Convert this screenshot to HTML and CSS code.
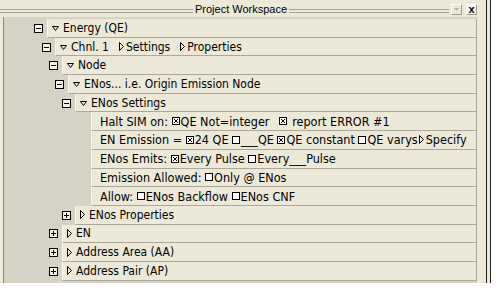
FILE: index.html
```html
<!DOCTYPE html>
<html lang="en">

<head>
    <meta charset="UTF-8">
    <title>Project Workspace</title>
    <link rel="stylesheet" href="styles.css">
</head>

<body>
    <div class="workspace">
        <div class="panel">
            <div class="titlebar">
                <span class="rule left"></span>
                <span class="title">Project Workspace</span>
                <span class="rule"></span>
                <span class="tb-btn drop">
                    <svg width="5" height="3" viewBox="0 0 5 3"><path d="M0 0h5l-2.5 3z" fill="#b5b2a6"/></svg>
                </span>
                <span class="tb-btn close">x</span>
            </div>

            <div class="tree">
                <div class="row">
                    <span class="toggle minus l0"></span>
                    <div class="cell"><svg class="tri-d" width="7" height="5" viewBox="0 0 7 5"><path d="M.5 .5h6l-3 4z" fill="none" stroke="#000"/></svg>Energy (QE)</div>
                </div>
                <div class="row">
                    <span class="toggle minus l1"></span>
                    <div class="cell"><svg class="tri-d" width="7" height="5" viewBox="0 0 7 5"><path d="M.5 .5h6l-3 4z" fill="none" stroke="#000"/></svg>Chnl. 1<span class="link"><svg class="tri-r" width="5" height="9" viewBox="0 0 5 9"><path d="M.5 .5v8l4-4z" fill="none" stroke="#000"/></svg>Settings</span><span class="link"><svg class="tri-r" width="5" height="9" viewBox="0 0 5 9"><path d="M.5 .5v8l4-4z" fill="none" stroke="#000"/></svg>Properties</span></div>
                </div>
                <div class="row">
                    <span class="toggle minus l2"></span>
                    <div class="cell"><svg class="tri-d" width="7" height="5" viewBox="0 0 7 5"><path d="M.5 .5h6l-3 4z" fill="none" stroke="#000"/></svg>Node</div>
                </div>
                <div class="row">
                    <span class="toggle minus l3"></span>
                    <div class="cell"><svg class="tri-d" width="7" height="5" viewBox="0 0 7 5"><path d="M.5 .5h6l-3 4z" fill="none" stroke="#000"/></svg>ENos... i.e. Origin Emission Node</div>
                </div>
                <div class="row">
                    <span class="toggle minus l4"></span>
                    <div class="cell"><svg class="tri-d" width="7" height="5" viewBox="0 0 7 5"><path d="M.5 .5h6l-3 4z" fill="none" stroke="#000"/></svg>ENos Settings</div>
                </div>

                <div class="row leaf">
                    <div class="cell">Halt SIM on:&nbsp;<svg class="check" width="8" height="8" viewBox="0 0 8 8"><rect x=".5" y=".5" width="7" height="7" fill="#fff" stroke="#000"/><path d="M2 2l4 4M6 2l-4 4" stroke="#000"/></svg>QE Not=integer&nbsp;&nbsp;<svg class="check wide" width="8" height="8" viewBox="0 0 8 8"><rect x=".5" y=".5" width="7" height="7" fill="#fff" stroke="#000"/><path d="M2 2l4 4M6 2l-4 4" stroke="#000"/></svg>&nbsp;report ERROR #1</div>
                </div>
                <div class="row leaf">
                    <div class="cell">EN Emission =&nbsp;<svg class="check" width="8" height="8" viewBox="0 0 8 8"><rect x=".5" y=".5" width="7" height="7" fill="#fff" stroke="#000"/><path d="M2 2l4 4M6 2l-4 4" stroke="#000"/></svg>24 QE&nbsp;<svg class="check" width="8" height="8" viewBox="0 0 8 8"><rect x=".5" y=".5" width="7" height="7" fill="#fff" stroke="#000"/></svg>___QE&nbsp;<svg class="check" width="8" height="8" viewBox="0 0 8 8"><rect x=".5" y=".5" width="7" height="7" fill="#fff" stroke="#000"/><path d="M2 2l4 4M6 2l-4 4" stroke="#000"/></svg>QE constant&nbsp;<svg class="check" width="8" height="8" viewBox="0 0 8 8"><rect x=".5" y=".5" width="7" height="7" fill="#fff" stroke="#000"/></svg>QE varys<svg class="tri-r spec" width="5" height="9" viewBox="0 0 5 9"><path d="M.5 .5v8l4-4z" fill="none" stroke="#000"/></svg>Specify</div>
                </div>
                <div class="row leaf">
                    <div class="cell">ENos Emits:&nbsp;<svg class="check" width="8" height="8" viewBox="0 0 8 8"><rect x=".5" y=".5" width="7" height="7" fill="#fff" stroke="#000"/><path d="M2 2l4 4M6 2l-4 4" stroke="#000"/></svg>Every Pulse&nbsp;<svg class="check" width="8" height="8" viewBox="0 0 8 8"><rect x=".5" y=".5" width="7" height="7" fill="#fff" stroke="#000"/></svg>Every___Pulse</div>
                </div>
                <div class="row leaf">
                    <div class="cell">Emission Allowed:&nbsp;<svg class="check" width="8" height="8" viewBox="0 0 8 8"><rect x=".5" y=".5" width="7" height="7" fill="#fff" stroke="#000"/></svg>Only @ ENos</div>
                </div>
                <div class="row leaf">
                    <div class="cell">Allow:&nbsp;<svg class="check" width="8" height="8" viewBox="0 0 8 8"><rect x=".5" y=".5" width="7" height="7" fill="#fff" stroke="#000"/></svg>ENos Backflow&nbsp;<svg class="check" width="8" height="8" viewBox="0 0 8 8"><rect x=".5" y=".5" width="7" height="7" fill="#fff" stroke="#000"/></svg>ENos CNF</div>
                </div>

                <div class="row">
                    <span class="toggle plus l4"></span>
                    <div class="cell"><svg class="tri-r lead" width="5" height="9" viewBox="0 0 5 9"><path d="M.5 .5v8l4-4z" fill="none" stroke="#000"/></svg>ENos Properties</div>
                </div>
                <div class="row">
                    <span class="toggle plus l2"></span>
                    <div class="cell"><svg class="tri-r lead" width="5" height="9" viewBox="0 0 5 9"><path d="M.5 .5v8l4-4z" fill="none" stroke="#000"/></svg>EN</div>
                </div>
                <div class="row">
                    <span class="toggle plus l2"></span>
                    <div class="cell"><svg class="tri-r lead" width="5" height="9" viewBox="0 0 5 9"><path d="M.5 .5v8l4-4z" fill="none" stroke="#000"/></svg>Address Area (AA)</div>
                </div>
                <div class="row">
                    <span class="toggle plus l2"></span>
                    <div class="cell"><svg class="tri-r lead" width="5" height="9" viewBox="0 0 5 9"><path d="M.5 .5v8l4-4z" fill="none" stroke="#000"/></svg>Address Pair (AP)</div>
                </div>
            </div>
        </div>
    </div>
</body>

</html>
```

FILE: styles.css
```css
body {
    margin: 0;
    background: #fff;
    font-family: "DejaVu Sans Condensed", "DejaVu Sans", sans-serif;
    font-stretch: condensed;
    font-size: 12px;
    color: #000;
}

.workspace {
    width: 487px;
    height: 283px;
    padding-right: 3px;
    background: #ece9d8;
    border-right: 1px solid #1e1e1e;
}

.panel {
    height: 100%;
    border-right: 1px solid #1e1e1e;
    display: flex;
    flex-direction: column;
}

/* title bar */
.titlebar {
    height: 17px;
    display: flex;
    align-items: center;
    flex-shrink: 0;
}

.rule {
    flex: 1;
    height: 2px;
    border-top: 1px solid #a7a497;
    border-bottom: 1px solid #a7a497;
    margin-top: 4px;
}

.rule.left {
    flex: none;
    width: 193px;
}

.title {
    font-family: "Liberation Sans", Arial, sans-serif;
    font-stretch: normal;
    font-size: 11px;
    padding: 0 2px;
    margin-top: 1px;
}

.tb-btn {
    width: 9px;
    height: 9px;
    border: 1px solid;
    border-color: #fff #9d9a8c #9d9a8c #fff;
    display: flex;
    justify-content: center;
    align-items: center;
    margin-top: 2px;
}

.drop {
    margin-left: 2px;
    margin-right: 4px;
}

.close {
    background: #f6f5ef;
    font-family: "Liberation Sans", Arial, sans-serif;
    font-stretch: normal;
    font-weight: bold;
    font-size: 11px;
    line-height: 9px;
    padding-bottom: 1px;
    height: 8px;
    margin-right: 9px;
}

/* tree */
.tree {
    flex: 1;
    width: 473px;
    margin-left: 3px;
    padding-top: 2px;
    border-left: 1px solid #8c897c;
    background: #d6d2c6;
}

.row {
    height: 18.7px;
    display: flex;
    align-items: center;
}

.cell {
    flex: 1;
    height: 100%;
    box-sizing: border-box;
    display: flex;
    align-items: center;
    padding-left: 4px;
    background: #ece9d8;
    border-left: 1px solid #f7f6f0;
    border-bottom: 1px solid #aca899;
    border-right: 1px solid #aca899;
    white-space: nowrap;
}

.leaf {
    font-size: 12.5px;
}

.leaf .cell {
    margin-left: 87px;
    padding-left: 8px;
}

.toggle {
    position: relative;
    width: 7px;
    height: 7px;
    border: 1px solid #000;
    background: #f4f2ea;
    margin-right: 4px;
    flex-shrink: 0;
}

.toggle::after {
    content: "";
    position: absolute;
    left: 1px;
    top: 3px;
    width: 5px;
    height: 1px;
    background: #000;
}

.plus::before {
    content: "";
    position: absolute;
    left: 3px;
    top: 1px;
    width: 1px;
    height: 5px;
    background: #000;
}

.l0 { margin-left: 30px; }
.l1 { margin-left: 38px; }
.l2 { margin-left: 45px; }
.l3 { margin-left: 51px; }
.l4 { margin-left: 58px; }

.tri-d {
    margin-right: 4px;
    margin-top: 1px;
}

.tri-r {
    margin-right: 2px;
}

.tri-r.lead {
    margin-right: 4px;
}

.link {
    display: flex;
    align-items: center;
    margin-left: 10px;
}

.check {
    margin-right: 1px;
}

.check.wide {
    margin-left: 2px;
    margin-right: 2px;
}

.spec {
    margin-left: 1px;
}
```
